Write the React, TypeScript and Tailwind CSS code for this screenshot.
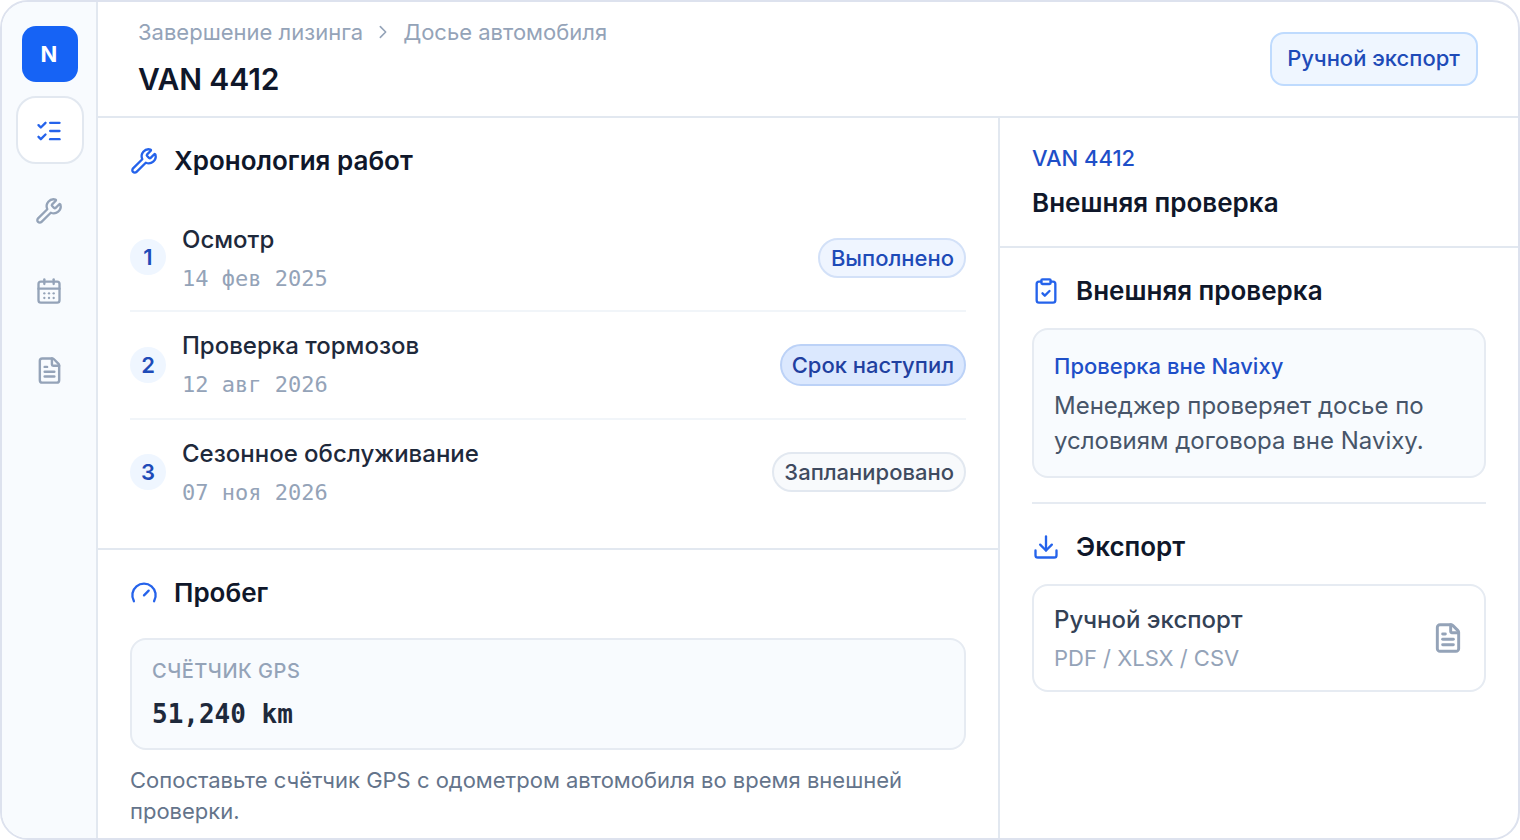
import { CalendarDays, ClipboardCheck, Download, FileText, Gauge, ListChecks, Wrench } from "lucide-react";
import type { ReactNode } from "react";

const mono = "font-['DejaVu_Sans_Mono',monospace]";

interface Job {
  num: number;
  title: string;
  date: string;
  status: string;
  row: string;
  text: string;
  badge: string;
}

const jobs: Job[] = [
  {
    num: 1,
    title: "Осмотр",
    date: "14 фев 2025",
    status: "Выполнено",
    row: "h-[108px] border-b-2 border-[#f1f5f9]",
    text: "pt-[4px]",
    badge: "mt-[2px] h-[40px] pr-[10px] pl-[11px] border-[#d3e1f8] bg-[#eff5ff] text-[#1e4bb8]",
  },
  {
    num: 2,
    title: "Проверка тормозов",
    date: "12 авг 2026",
    status: "Срок наступил",
    row: "h-[108px] border-b-2 border-[#f1f5f9]",
    text: "",
    badge: "h-[42px] px-[10px] border-[#bcd2f7] bg-[#dbe8fe] text-[#1f40a0]",
  },
  {
    num: 3,
    title: "Сезонное обслуживание",
    date: "07 ноя 2026",
    status: "Запланировано",
    row: "h-[104px]",
    text: "pt-[2px]",
    badge: "h-[40px] pr-[10px] pl-[10px] border-[#e2e8f0] bg-[#f8fafc] text-[#3f4b5f]",
  },
];

function SectionTitle({ icon, children }: { icon: ReactNode; children: ReactNode }) {
  return (
    <div className="flex items-center gap-[16px] text-[#2563eb]">
      {icon}
      <h2 className="text-[26px] leading-[36px] font-semibold text-[#0f172a]">{children}</h2>
    </div>
  );
}

function App() {
  return (
    <div className="h-[840px] w-[1520px] overflow-hidden bg-white font-['Inter',sans-serif]">
      <div className="flex h-full overflow-hidden rounded-[28px] border-2 border-[#dde2ee]">
        <aside className="flex w-[96px] shrink-0 flex-col items-center border-r-2 border-[#e2e8f0] bg-[#f8fbfe] pt-[24px] pl-[2px] text-[#94a3b8]">
          <div className="flex h-[56px] w-[56px] items-center justify-center rounded-[14px] bg-[#1663f5] pr-[2px] text-[22px] font-bold text-white">N</div>
          <div className="mt-[14px] flex h-[68px] w-[68px] items-center justify-center rounded-[20px] border-2 border-[#e2e8f0] bg-white pt-[2px] pr-[2px] text-[#2563eb]">
            <ListChecks size={28} strokeWidth={2} />
          </div>
          <div className="mt-[33px] -ml-[2px] flex h-[28px] items-center">
            <Wrench size={28} strokeWidth={2} />
          </div>
          <div className="mt-[52px] -ml-[2px] flex h-[28px] items-center">
            <CalendarDays size={28} strokeWidth={2} />
          </div>
          <div className="mt-[51px] -ml-[2px] flex h-[28px] items-center">
            <FileText size={29} strokeWidth={2} />
          </div>
        </aside>

        <div className="flex min-w-0 flex-1 flex-col">
          <header className="flex h-[116px] shrink-0 items-center justify-between border-b-2 border-[#e2e8f0] pr-[40px] pl-[40px]">
            <div className="-mt-[2px]">
              <div className="flex items-center gap-[12px] text-[22px] leading-[32px] text-[#94a3b8]">
                <span>Завершение лизинга</span>
                <span className="text-[#94a3b8]">
                  <svg width="16" height="16" viewBox="0 0 24 24" fill="none" stroke="currentColor" strokeWidth="2.4" strokeLinecap="round" strokeLinejoin="round"><path d="m8 4 8 8-8 8" /></svg>
                </span>
                <span>Досье автомобиля</span>
              </div>
              <h1 className="mt-[9px] text-[30px] leading-[44px] font-semibold tracking-[-0.1px] text-[#0f172a]">VAN 4412</h1>
            </div>
            <button className="flex h-[54px] w-[208px] items-center justify-center rounded-[14px] border-2 border-[#bfdbfe] bg-[#eff6ff] pr-[1px] pb-[2px] text-[22px] font-medium text-[#1e4bb8]">
              Ручной экспорт
            </button>
          </header>

          <div className="flex min-h-0 flex-1">
            <main className="w-[902px] shrink-0 border-r-2 border-[#e2e8f0]">
              <section className="h-[432px] border-b-2 border-[#e2e8f0] px-[32px] pt-[25px]">
                <SectionTitle icon={<Wrench size={28} strokeWidth={2} />}>Хронология работ</SectionTitle>
                <div className="mt-[25px]">
                  {jobs.map((job) => (
                    <div key={job.num} className={`flex items-center justify-between ${job.row}`}>
                      <div className="flex items-center gap-[16px]">
                        <div className="flex h-[36px] w-[36px] items-center justify-center rounded-full bg-[#eff6ff] text-[22px] font-semibold text-[#1e4bb8]">{job.num}</div>
                        <div className={job.text}>
                          <div className="text-[24px] leading-[36px] font-medium text-[#1e293b]">{job.title}</div>
                          <div className={`mt-[3px] text-[22px] leading-[36px] text-[#94a3b8] ${mono}`}>{job.date}</div>
                        </div>
                      </div>
                      <span className={`flex items-center rounded-full border-2 text-[22px] font-medium ${job.badge}`}>{job.status}</span>
                    </div>
                  ))}
                </div>
              </section>

              <section className="px-[32px] pt-[25px]">
                <SectionTitle icon={<Gauge size={28} strokeWidth={2} />}>Пробег</SectionTitle>
                <div className="mt-[27px] h-[112px] rounded-[16px] border-2 border-[#e6ebf2] bg-[#f8fbfe] px-[20px] pt-[17px]">
                  <div className="text-[20px] leading-[28px] font-medium tracking-[0.5px] text-[#94a3b8]">СЧЁТЧИК GPS</div>
                  <div className={`mt-[11px] text-[26px] leading-[36px] font-semibold text-[#1e293b] ${mono}`}>51,240 km</div>
                </div>
                <p className="mt-[15px] text-[22px] leading-[31px] text-[#64748b]">
                  Сопоставьте счётчик GPS с одометром автомобиля во время внешней проверки.
                </p>
              </section>
            </main>

            <aside className="min-w-0 flex-1">
              <div className="h-[130px] border-b-2 border-[#e2e8f0] px-[32px] pt-[22px]">
                <div className="text-[22px] leading-[36px] font-medium text-[#1e4fc8]">VAN 4412</div>
                <div className="mt-[9px] text-[26px] leading-[36px] font-semibold text-[#0f172a]">Внешняя проверка</div>
              </div>
              <div className="px-[32px] pt-[25px]">
                <SectionTitle icon={<ClipboardCheck size={28} strokeWidth={2} />}>Внешняя проверка</SectionTitle>
                <div className="mt-[19px] h-[150px] rounded-[16px] border-2 border-[#e6ebf2] bg-[#f8fbfe] px-[20px] pt-[18px]">
                  <div className="text-[22px] leading-[36px] font-medium text-[#1e4fc8]">Проверка вне Navixy</div>
                  <p className="mt-[4px] text-[24px] leading-[35px] text-[#475569]">Менеджер проверяет досье по условиям договора вне Navixy.</p>
                </div>
                <div className="mt-[24px] border-t-2 border-[#e6ebf2] pt-[25px]">
                  <SectionTitle icon={<Download size={28} strokeWidth={2} />}>Экспорт</SectionTitle>
                  <div className="mt-[19px] flex h-[108px] items-center justify-between rounded-[16px] border-2 border-[#e6ebf2] bg-white pr-[20px] pl-[20px]">
                    <div className="pt-[1px]">
                      <div className="text-[24px] leading-[36px] font-medium text-[#334155]">Ручной экспорт</div>
                      <div className="mt-[2px] text-[22px] leading-[36px] text-[#94a3b8]">PDF / XLSX / CSV</div>
                    </div>
                    <FileText size={32} strokeWidth={2.2} className="text-[#94a3b8]" />
                  </div>
                </div>
              </div>
            </aside>
          </div>
        </div>
      </div>
    </div>
  );
}

export default App;
